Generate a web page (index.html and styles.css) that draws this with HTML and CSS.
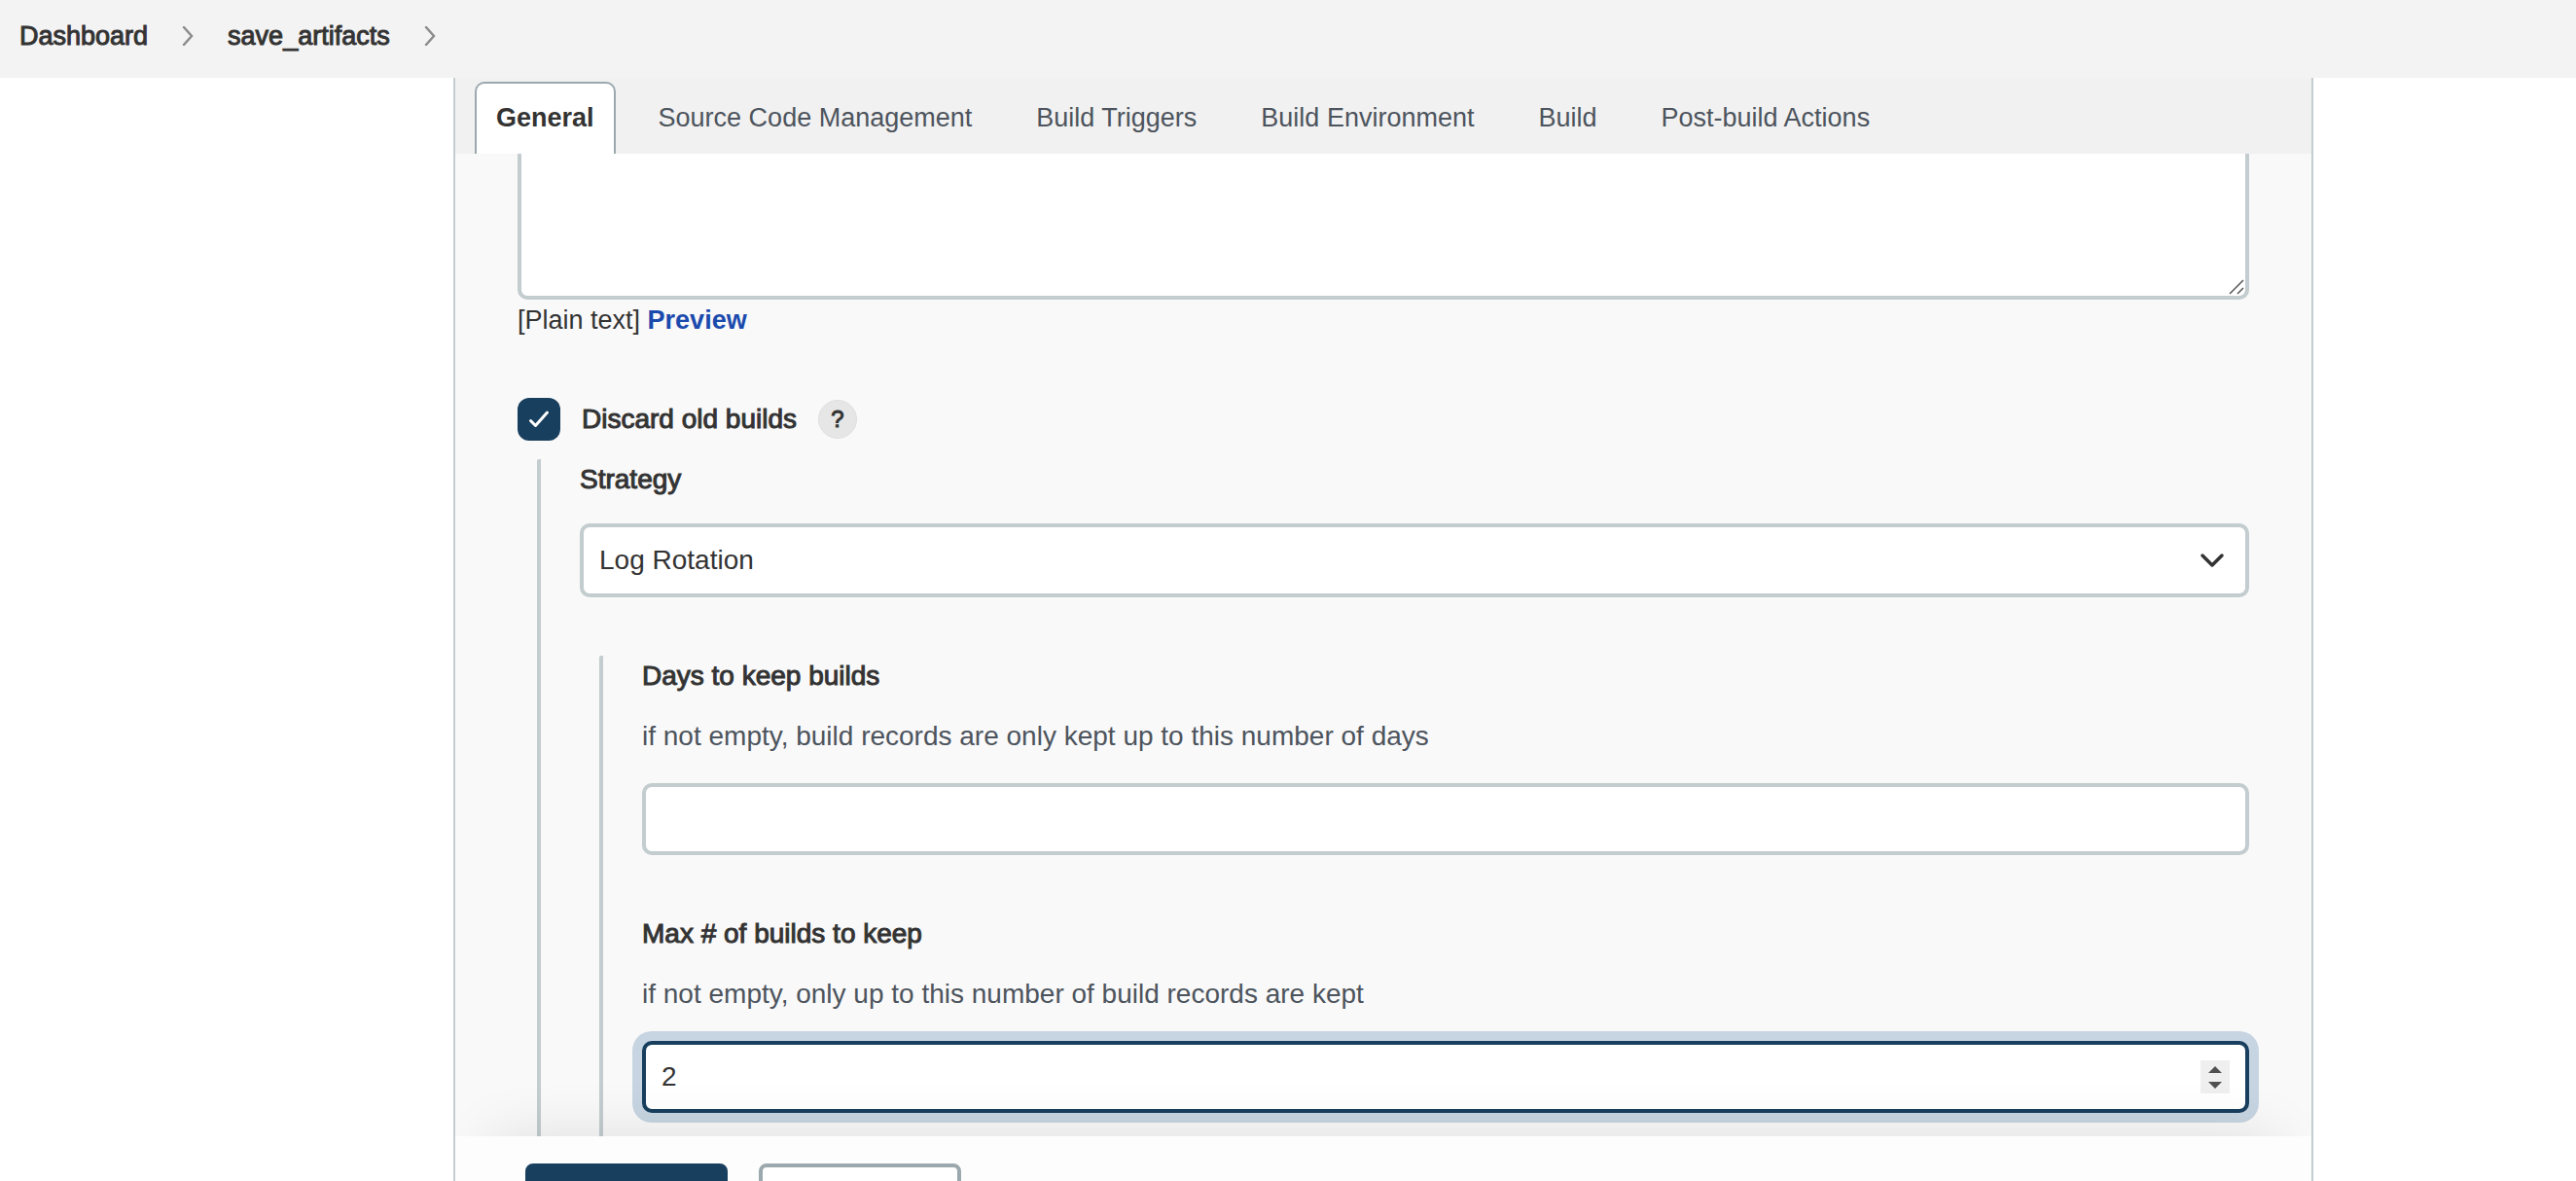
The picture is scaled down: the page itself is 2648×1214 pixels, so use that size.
FILE: index.html
```html
<!DOCTYPE html>
<html lang="en">
<head>
<meta charset="utf-8">
<title>save_artifacts Config</title>
<link rel="stylesheet" href="styles.css">
</head>
<body>
<nav class="breadcrumbs" aria-label="Breadcrumb">
  <a class="medium" href="#">Dashboard</a>
  <svg class="crumb-arrow" viewBox="0 0 12 20" aria-hidden="true"><path d="M2 1l8 9-8 9"/></svg>
  <a class="medium" href="#">save_artifacts</a>
  <svg class="crumb-arrow" viewBox="0 0 12 20" aria-hidden="true"><path d="M2 1l8 9-8 9"/></svg>
</nav>
<main class="panel">
  <nav class="tabs" aria-label="Sections">
    <a class="tab tab-active" href="#">General</a>
    <a class="tab" href="#">Source Code Management</a>
    <a class="tab" href="#">Build Triggers</a>
    <a class="tab" href="#">Build Environment</a>
    <a class="tab" href="#">Build</a>
    <a class="tab" href="#">Post-build Actions</a>
  </nav>
  <form class="config">
    <div class="fields">
      <div class="textarea-wrap">
        <textarea class="control description" aria-label="Description"></textarea>
        <svg class="grip" viewBox="0 0 16 16" aria-hidden="true"><path d="M1 15L15 1M9 15l6-6"/></svg>
      </div>
      <div class="line markup">[Plain text] <a class="preview" href="#">Preview</a></div>
      <div class="check-row">
        <span class="check">
          <input class="check-input" type="checkbox" id="discard" checked>
          <svg class="check-mark" viewBox="0 0 44 44" aria-hidden="true"><path d="M13.500 23.500l5 5 12-13.500"/></svg>
        </span>
        <label class="line medium" for="discard">Discard old builds</label>
        <button class="help medium" type="button" aria-label="Help for Discard old builds">?</button>
      </div>
      <div class="group">
        <label class="line medium" for="strategy">Strategy</label>
        <div class="control-wrap select-wrap">
          <select class="control select" id="strategy"><option>Log Rotation</option></select>
          <svg class="chevron" viewBox="0 0 26 16" aria-hidden="true"><path d="M3 3l10 10L23 3"/></svg>
        </div>
        <div class="group group-inner">
          <div class="field">
            <label class="line medium" for="days">Days to keep builds</label>
            <p class="line hint">if not empty, build records are only kept up to this number of days</p>
            <input class="control number" type="number" id="days">
          </div>
          <div class="field">
            <label class="line medium" for="max">Max # of builds to keep</label>
            <p class="line hint">if not empty, only up to this number of build records are kept</p>
            <div class="control-wrap">
              <input class="control number number-active" type="number" id="max" value="2">
              <svg class="spinner" viewBox="0 0 30 34" aria-hidden="true"><rect width="30" height="34" fill="#efefef"/><path d="M8 13l7-7 7 7zM8 22l7 7 7-7z" fill="#505050"/></svg>
            </div>
          </div>
        </div>
      </div>
    </div>
    <div class="actions">
      <div class="actions-bar">
        <button class="btn btn-primary" type="submit" aria-label="Save"></button>
        <button class="btn" type="button" aria-label="Apply"></button>
      </div>
    </div>
  </form>
</main>
</body>
</html>
```
FILE: styles.css
```css
* { box-sizing: border-box; }
body {
  margin: 0;
  height: 100vh;
  overflow: hidden;
  display: flex;
  flex-direction: column;
  background: #fff;
  color: #333;
  font: 27px/42px "Liberation Sans", Arial, sans-serif;
}
a { color: inherit; text-decoration: none; }
p { margin: 0; }
.medium { -webkit-text-stroke: 1px currentColor; }

.breadcrumbs {
  flex: none;
  height: 80px;
  padding: 0 20px 6px;
  display: flex;
  align-items: center;
  gap: 35px;
  background: #f3f3f3;
}
.crumb-arrow { width: 12px; height: 20px; fill: none; stroke: #8c8c8c; stroke-width: 2.500; stroke-linecap: round; }

.panel {
  flex: 1;
  min-height: 0;
  margin: 0 270px 0 466px;
  border: solid #c4cdd1;
  border-width: 0 2px;
  display: flex;
  flex-direction: column;
  background: #f9f9f9;
}
.tabs {
  flex: none;
  height: 78px;
  padding: 4px 20px 0;
  display: flex;
  gap: 22px;
  background: #f1f1f1;
}
.tab {
  padding: 14px 20px 0;
  border: 2px solid transparent;
  border-bottom: 0;
  border-radius: 10px 10px 0 0;
  color: #4d545d;
  white-space: nowrap;
}
.tab-active { background: #fff; border-color: #9ba8ae; color: #333; font-weight: 700; }

.config { flex: 1; min-height: 0; display: flex; flex-direction: column; overflow: hidden; }
.fields { flex: 1; min-height: 0; overflow: hidden; padding: 0 64px; font-size: 28px; }
.line { display: block; }
.control {
  display: block;
  width: 100%;
  margin: 0;
  padding: 0 16px;
  border: 4px solid #c3cccf;
  border-radius: 10px;
  background: #fff;
  color: #333;
  font: inherit;
  outline: 0;
  appearance: none;
}
.textarea-wrap { position: relative; margin-top: -40px; }
.description { height: 190px; resize: none; }
.grip { position: absolute; right: 5px; bottom: 5px; width: 16px; height: 16px; stroke: #555; stroke-width: 1.500; fill: none; }
.markup { font-size: 27px; }
.preview { color: #1b4aad; font-weight: 700; }

.check-row { display: flex; align-items: center; height: 44px; margin: 59px 0 19px; }
.check { position: relative; width: 44px; height: 44px; margin-right: 22px; }
.check-input { appearance: none; display: block; width: 44px; height: 44px; margin: 0; border-radius: 12px; background: #193f5e; }
.check-mark { position: absolute; inset: 0; fill: none; stroke: #fff; stroke-width: 3; stroke-linecap: round; stroke-linejoin: round; pointer-events: none; }
.help {
  width: 40px;
  height: 40px;
  margin-left: 22px;
  padding: 0;
  border: 1px solid #e0e0e0;
  border-radius: 50%;
  background: #e6e6e6;
  color: #333;
  font: inherit;
  font-size: 24px;
  line-height: 38px;
}

.group { margin-left: 20px; padding: 0 0 60px 40px; border-left: 4px solid #c3cccf; border-radius: 2px; }
.group-inner { margin-top: 60px; }
.control-wrap { position: relative; }
.select-wrap { margin-top: 24px; }
.select { height: 76px; }
.chevron { position: absolute; right: 25px; top: 30px; width: 26px; height: 16px; fill: none; stroke: #333; stroke-width: 3.500; stroke-linecap: round; stroke-linejoin: round; pointer-events: none; }
.field + .field { margin-top: 60px; }
.hint { margin: 20px 0 27px; color: #4d545d; }
.number { height: 74px; appearance: textfield; }
.number::-webkit-inner-spin-button { appearance: none; }
.number-active { border-color: #193f5e; box-shadow: 0 0 0 10px #c7d5e2; }
.spinner { position: absolute; right: 20px; top: 20px; width: 30px; height: 34px; }

.actions { position: relative; flex: none; height: 46px; }
.actions::before { content: ""; position: absolute; inset: 0 36px -80px; box-shadow: 0 0 60px rgba(0, 0, 0, .11); }
.actions-bar { position: relative; display: flex; gap: 32px; padding: 28px 72px 0; background: #fdfdfd; }
.btn { width: 208px; height: 72px; border: 4px solid #9ba8ae; border-radius: 8px; background: #fff; }
.btn-primary { background: #193f5e; border-color: #193f5e; }
```
